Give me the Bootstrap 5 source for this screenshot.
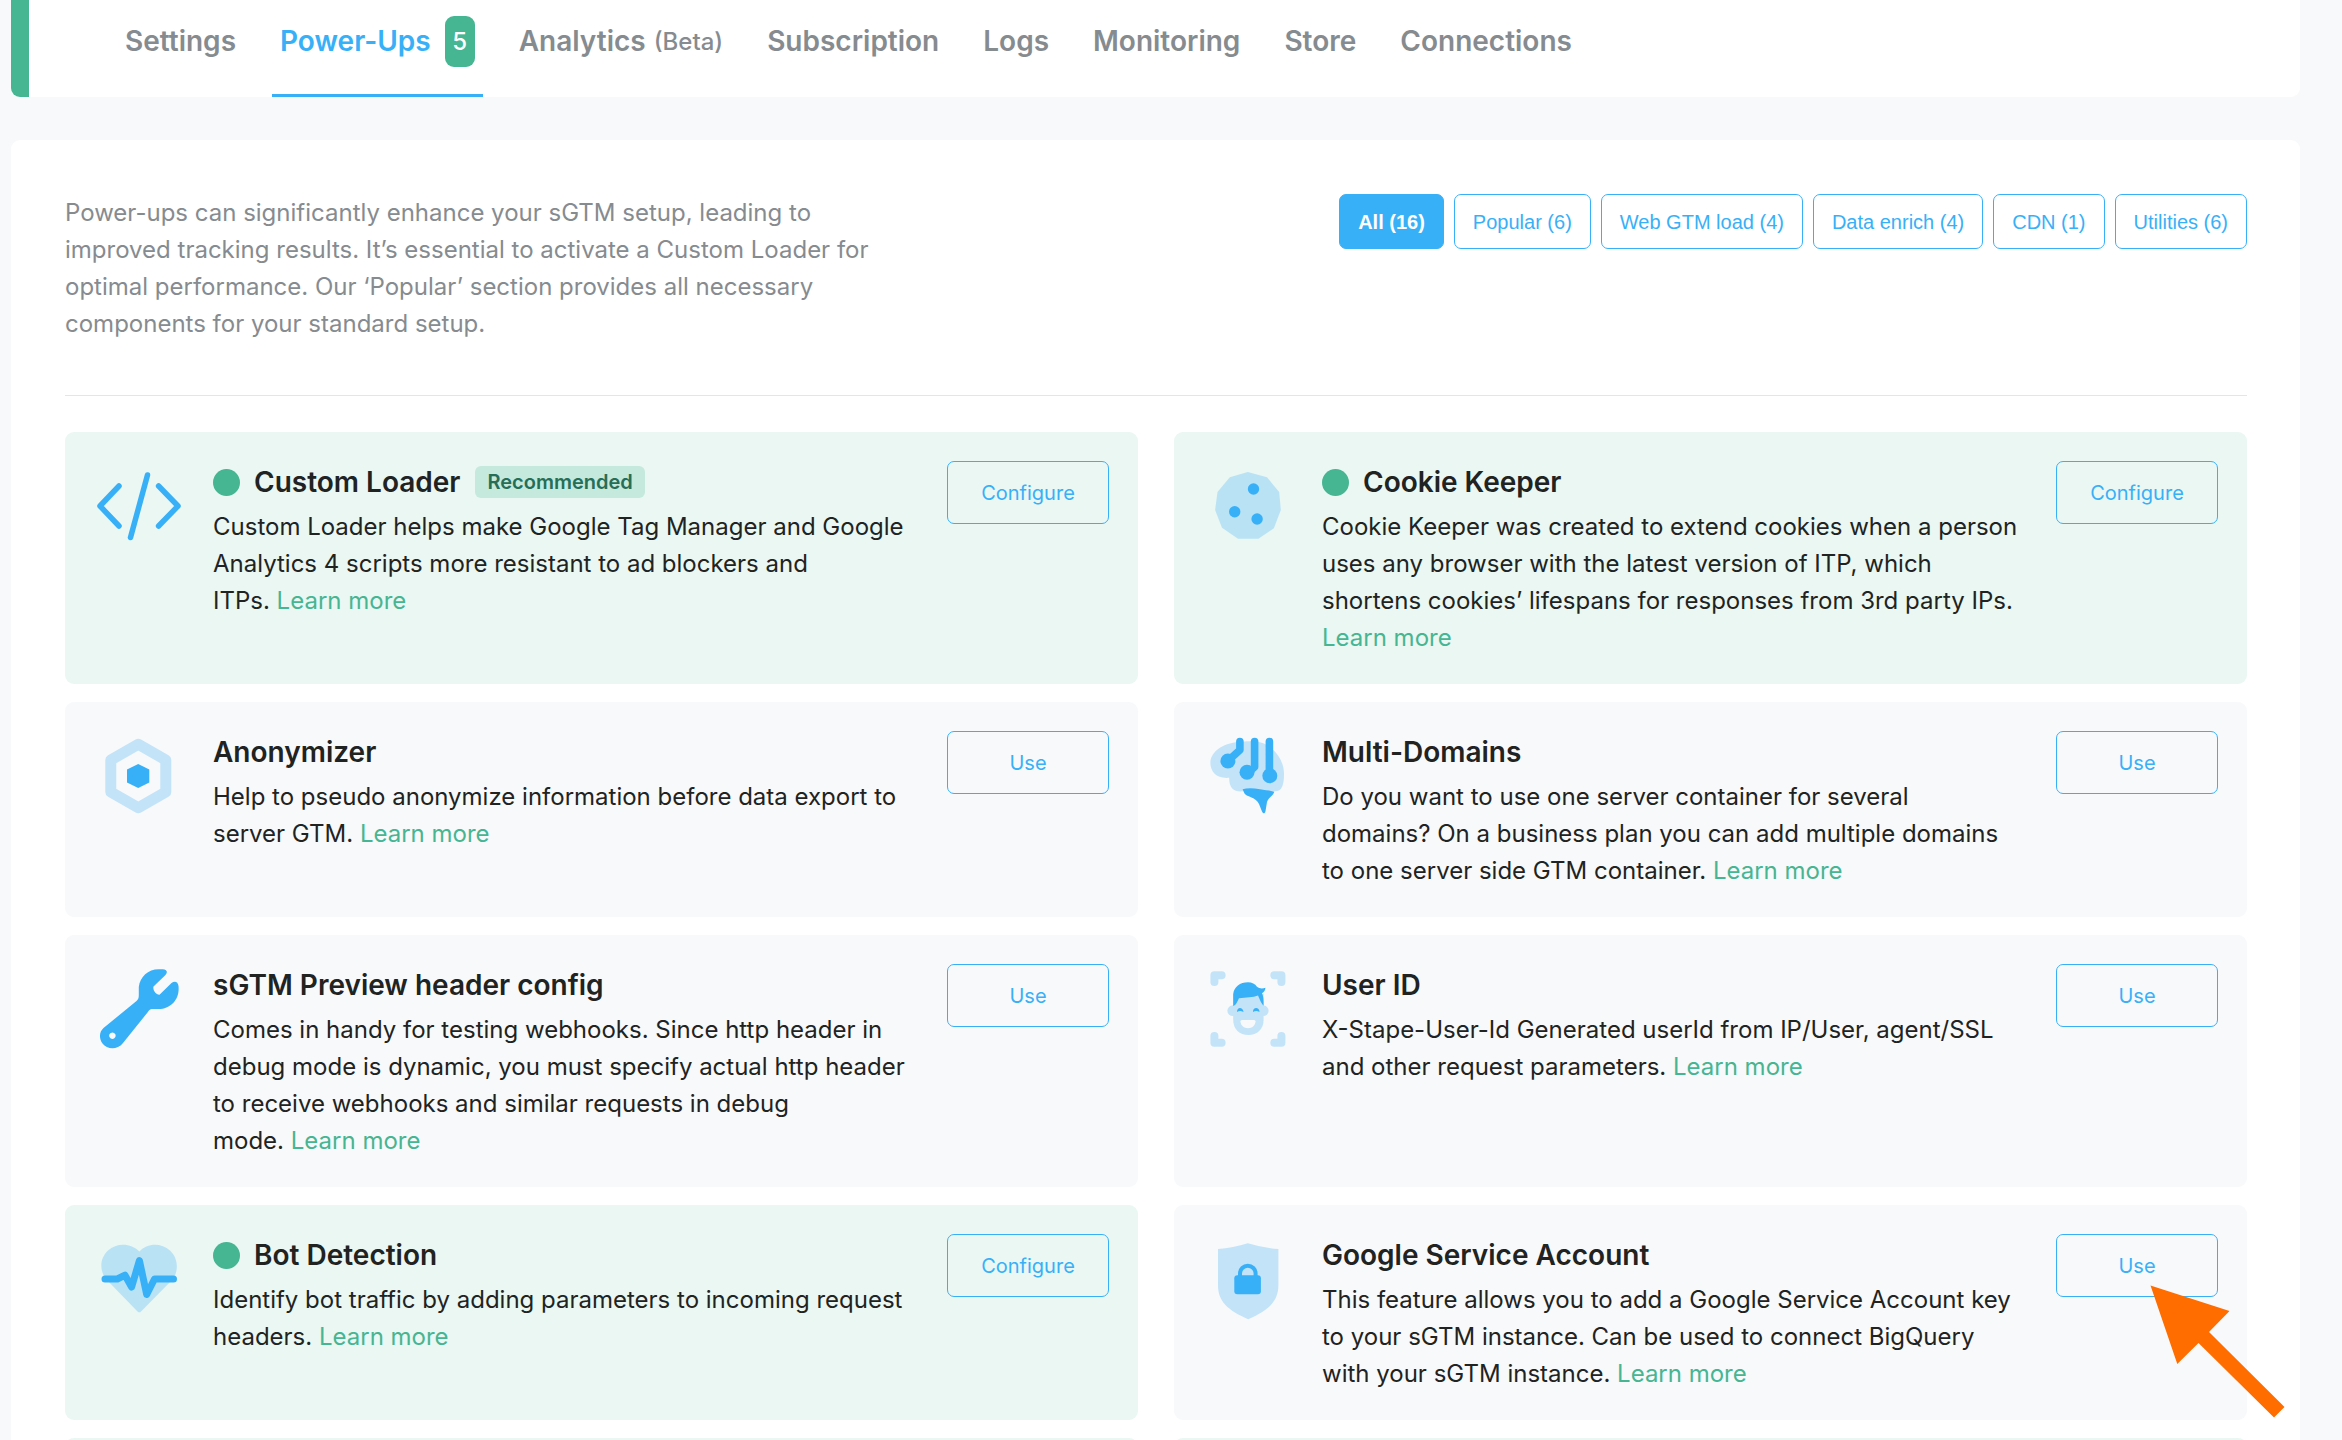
<!DOCTYPE html>
<html lang="en">
<head>
<meta charset="utf-8">
<meta name="viewport" content="width=device-width, initial-scale=1">
<title>Power-Ups</title>
<link href="https://cdn.jsdelivr.net/npm/bootstrap@5.3.0/dist/css/bootstrap.min.css" rel="stylesheet">
<style>
  :root { --sky: #38b0f8; --sky-soft: #c3e3f8; --leaf: #46b592; --ink: #212322; --slate: #868b90; }
  body { background: #f8f9fb; color: var(--ink); font: 400 24px/37px Inter, "Liberation Sans", sans-serif; }
  .page { padding: 0 42px 0 11px; }
  .tabs-panel { background: #fff; border-left: 18px solid var(--leaf); border-radius: 0 0 9px 9px; padding-left: 88px; gap: 28px; height: 97px; }
  .tabs-panel a { display: flex; align-items: center; padding: 0 8px 12px; border-bottom: 3px solid transparent; color: var(--slate); font-size: 28px; font-weight: 600; text-decoration: none; white-space: nowrap; }
  .tabs-panel a.active { color: var(--sky); border-color: var(--sky); }
  .tab-count { background: var(--leaf); color: #fff; font-size: 24px; font-weight: 500; line-height: 51px; width: 30px; margin-left: 14px; border-radius: 9px; text-align: center; }
  .tab-note { font-size: 24px; font-weight: 500; margin-left: 8px; }
  .content-panel { background: #fff; border-radius: 9px; margin-top: 43px; padding: 54px 53px 54px 54px; }
  .intro { color: var(--slate); max-width: 828px; }
  .filters { gap: 10px; }
  .filters .btn, .btn-action { --bs-btn-color: var(--sky); --bs-btn-border-color: var(--sky); --bs-btn-active-bg: var(--sky); --bs-btn-active-border-color: var(--sky); --bs-btn-active-color: #fff; border-radius: 7px; font-size: 20px; }
  .filters .btn { font-family: "Liberation Sans", Arial, sans-serif; height: 55px; padding: 0 18px; white-space: nowrap; }
  .filters .btn.active { font-weight: 700; }
  .rule { border-top: 1px solid #e3e6e8; margin: 53px 0 36px; }
  .grid { display: grid; grid-template-columns: 1fr 1fr; gap: 18px 36px; }
  .power { display: flex; align-items: flex-start; gap: 29px; padding: 29px 29px 28px; background: #f8f9fb; border-radius: 9px; min-height: 215px; }
  .power.on { background: #eaf7f3; }
  .power > svg { width: 90px; height: 90px; flex: none; }
  .power h2 { display: flex; align-items: center; font-size: 28px; line-height: 42px; font-weight: 600; margin: 0 0 5px; }
  .power.on h2::before { content: ""; width: 27px; height: 27px; border-radius: 50%; background: var(--leaf); margin-right: 14px; }
  .power p { margin: 0; padding-right: 8px; }
  .power p a { color: var(--leaf); text-decoration: none; }
  .tag { background: #c5e9dc; color: #276e57; font-size: 20px; line-height: 32px; padding: 0 12px; border-radius: 6px; margin-left: 15px; }
  .btn-action { width: 162px; height: 63px; }
  .pointer { position: absolute; left: 94px; top: 51px; width: 135px; height: 133px; pointer-events: none; }
</style>
<script src="https://cdn.jsdelivr.net/npm/bootstrap@5.3.0/dist/js/bootstrap.bundle.min.js" defer></script>
</head>
<body class="vh-100 overflow-hidden">
<div class="page">
  <nav class="tabs-panel d-flex" aria-label="Container sections">
    <a href="#">Settings</a>
    <a href="#" class="active" aria-current="page">Power-Ups <span class="tab-count">5</span></a>
    <a href="#">Analytics <span class="tab-note">(Beta)</span></a>
    <a href="#">Subscription</a>
    <a href="#">Logs</a>
    <a href="#">Monitoring</a>
    <a href="#">Store</a>
    <a href="#">Connections</a>
  </nav>

  <main class="content-panel">
    <div class="d-flex justify-content-between align-items-start">
      <p class="intro mb-0">Power-ups can significantly enhance your sGTM setup, leading to improved tracking results. It’s essential to activate a Custom Loader for optimal performance. Our ‘Popular’ section provides all necessary components for your standard setup.</p>
      <div class="filters d-flex">
        <button type="button" class="btn active">All (16)</button>
        <button type="button" class="btn">Popular (6)</button>
        <button type="button" class="btn">Web GTM load (4)</button>
        <button type="button" class="btn">Data enrich (4)</button>
        <button type="button" class="btn">CDN (1)</button>
        <button type="button" class="btn">Utilities (6)</button>
      </div>
    </div>
    <div class="rule"></div>

    <div class="grid">
      <article class="power on">
        <svg viewBox="0 0 90 90" fill="none" stroke="#38b0f8" stroke-width="5.5" stroke-linecap="round" stroke-linejoin="round" aria-hidden="true"><path d="M25 25 6 45 25 65M64.6 25 84 45 64.6 65M53.5 14 36.5 76.5"/></svg>
        <div class="flex-fill">
          <h2>Custom Loader<span class="tag">Recommended</span></h2>
          <p>Custom Loader helps make Google Tag Manager and Google Analytics 4 scripts more resistant to ad blockers and ITPs.&nbsp;<a href="#">Learn&nbsp;more</a></p>
        </div>
        <button type="button" class="btn btn-action flex-shrink-0">Configure</button>
      </article>

      <article class="power on">
        <svg viewBox="0 0 90 90" aria-hidden="true"><path fill="#bae2f5" d="M44.8 11 64 16.3 76.2 31 77.8 49 70.9 67.3 55.4 77.7H35L19 66.7 12.1 49 14.5 31 26.8 16.3Z"/><g fill="#38b0f8"><circle cx="50.5" cy="28" r="5.7"/><circle cx="31.7" cy="50.7" r="5.7"/><circle cx="54.1" cy="58" r="5.7"/></g></svg>
        <div class="flex-fill">
          <h2>Cookie Keeper</h2>
          <p>Cookie Keeper was created to extend cookies when a person uses any browser with the latest version of ITP, which shortens cookies’ lifespans for responses from 3rd party IPs. <a href="#">Learn more</a></p>
        </div>
        <button type="button" class="btn btn-action flex-shrink-0">Configure</button>
      </article>

      <article class="power">
        <svg viewBox="0 0 90 90" aria-hidden="true"><path fill="none" stroke="#c3e3f8" stroke-width="11" stroke-linejoin="round" d="M44.3 13.2 71.8 29V61L44.3 76.8 16.8 61V29Z"/><path fill="#38b0f8" d="M44.2 33 55.3 38.5V51.5L44.2 57 33 51.5V38.5Z"/></svg>
        <div class="flex-fill">
          <h2>Anonymizer</h2>
          <p>Help to pseudo anonymize information before data export to server GTM. <a href="#">Learn more</a></p>
        </div>
        <button type="button" class="btn btn-action flex-shrink-0">Use</button>
      </article>

      <article class="power">
        <svg viewBox="0 0 90 90" aria-hidden="true"><path fill="#c3e3f8" d="M7.4 31C8 20 22 10.5 40 10.7 53 9 63 12 68 17 77 24 81 34 81 43 81 54 79 60.3 72 60.3H39.6C31 61 26 57 26.2 46.8 14 48 7 41 7.4 31Z"/><g stroke="#38b0f8" stroke-width="7.6" stroke-linecap="round" stroke-linejoin="round" fill="none"><path d="M36.9 10.500V19L27 28M51.6 10.500V36L46 41M66.4 10.500V43"/></g><g fill="#38b0f8"><circle cx="24.900" cy="30" r="7.5"/><circle cx="44" cy="41.300" r="7.5"/><circle cx="66.800" cy="44.700" r="7.5"/><path d="M39.600 58.300C44 57 50 57 57 58.300 62 59.300 67 59.500 71.300 60.700 70 65 65 67 64 71L62.500 80C62 83 60 83 59 80.500L56 73C53 66 44 66 41.500 62.500Z"/></g></svg>
        <div class="flex-fill">
          <h2>Multi-Domains</h2>
          <p>Do you want to use one server container for several domains? On a business plan you can add multiple domains to one server side GTM container. <a href="#">Learn more</a></p>
        </div>
        <button type="button" class="btn btn-action flex-shrink-0">Use</button>
      </article>

      <article class="power">
        <svg viewBox="0 0 90 90" aria-hidden="true"><path fill="#38b0f8" fill-rule="evenodd" d="M64.700 5.300C68 5.300 72 5 72.800 7.500 73 9 72 10 71 11.500L59.500 22.500C58.500 26 62 31 65.500 30.700L77.500 19C81 16.500 84 18 84.500 22 86 36 76 45 65 45H58C56 45 55 46.500 53.500 48.500L29 79C23 86.500 13 85.500 8.500 79.500 4.500 74 5.500 67.500 9.500 64L42.500 37C44.300 35.500 44.800 34 44.800 31V23C46 13 54 5.300 64.700 5.300ZM18.400 68.500a3.200 3.200 0 1 0 .01 0Z"/></svg>
        <div class="flex-fill">
          <h2>sGTM Preview header config</h2>
          <p>Comes in handy for testing webhooks. Since http header in debug mode is dynamic, you must specify actual http header to receive webhooks and similar requests in debug mode.&nbsp;<a href="#">Learn&nbsp;more</a></p>
        </div>
        <button type="button" class="btn btn-action flex-shrink-0">Use</button>
      </article>

      <article class="power">
        <svg viewBox="0 0 90 90" aria-hidden="true"><path fill="none" stroke="#c3e3f8" stroke-width="8" stroke-linecap="round" stroke-linejoin="round" d="M11.400 18V11.300H18.600M71.300 11.300H78.400V18M11.400 72V78.700H18.600M71.300 78.700H78.400V72"/><g fill="#c3e3f8"><path d="M30.200 30H60.600V56C60.600 65 54 71 45.400 71 36.500 71 30.200 65 30.200 56Z"/><circle cx="29.800" cy="46.700" r="5.400"/><circle cx="60.200" cy="46.700" r="5.400"/></g><path fill="#38b0f8" d="M30.200 42V30C31 23 37 18.300 45 18.300 49 18.300 52 20 54 22.800 57 25 60 24.500 62.400 23.700 62.400 26 61 28 59 29.300 60.600 32 60.600 37 60.600 41.700 58.500 40 57 36 55 31.500 50 33.500 43 33.500 36 34.300 34.500 37 33.500 41 30.200 42ZM34 48C34 42.500 40 43 40.500 48 38 46.500 36 46.500 34 48ZM50 48C49.500 43 56.500 42.500 56.500 48 54.500 46.500 52 46.500 50 48Z"/><path fill="#f8f9fb" d="M37.400 57.500Q37.400 56 39 56H51Q52.600 56 52.600 57.500C52 62 49 64.200 45 64.200S38 62 37.400 57.500Z"/></svg>
        <div class="flex-fill">
          <h2>User ID</h2>
          <p>X-Stape-User-Id Generated userId from IP/User, agent/SSL and other request parameters. <a href="#">Learn more</a></p>
        </div>
        <button type="button" class="btn btn-action flex-shrink-0">Use</button>
      </article>

      <article class="power on">
        <svg viewBox="0 0 90 90" aria-hidden="true"><path fill="#bae2f5" d="M45.400 17.500C53 9 67 8.500 76 16.500 84 24 85 36 79 45L47 77.500Q45.300 79.200 43.500 77.500L12 45C5 36 6 24 14 16.500 23 8.500 37 9 45.400 17.500Z"/><path fill="none" stroke="#38b0f8" stroke-width="7" stroke-linecap="round" stroke-linejoin="round" d="M11 45H23.300L31 41.200 37.600 53 45.400 26.500 52.700 60.500 60.500 45H79.500"/></svg>
        <div class="flex-fill">
          <h2>Bot Detection</h2>
          <p>Identify bot traffic by adding parameters to incoming request headers. <a href="#">Learn more</a></p>
        </div>
        <button type="button" class="btn btn-action flex-shrink-0">Configure</button>
      </article>

      <article class="power">
        <svg viewBox="0 0 90 90" aria-hidden="true"><path fill="#c3e3f8" d="M44.800 9.300Q60 14 75.400 15V51C75.400 68 65 76 45.200 85.300 25 76 15 68 15 51V15Q30 14 44.800 9.300Z"/><rect x="31.300" y="41.300" width="26.600" height="18.900" rx="3" fill="#38b0f8"/><path fill="none" stroke="#38b0f8" stroke-width="4" d="M37 43V39.500a7.800 7.800 0 0 1 15.600 0V43"/></svg>
        <div class="flex-fill">
          <h2>Google Service Account</h2>
          <p>This feature allows you to add a Google Service Account key to your sGTM instance. Can be used to connect BigQuery with your sGTM instance. <a href="#">Learn more</a></p>
        </div>
        <div class="position-relative flex-shrink-0">
          <button type="button" class="btn btn-action">Use</button>
          <svg class="pointer" viewBox="0 0 135 133" aria-hidden="true"><path fill="#ff6d00" d="M.5.5 79.500 26 59 47 134.500 122 124 132.500 48.500 58 27.300 79Z"/></svg>
        </div>
      </article>

      <article class="power on"></article>
      <article class="power on"></article>
    </div>
  </main>
</div>
</body>
</html>
